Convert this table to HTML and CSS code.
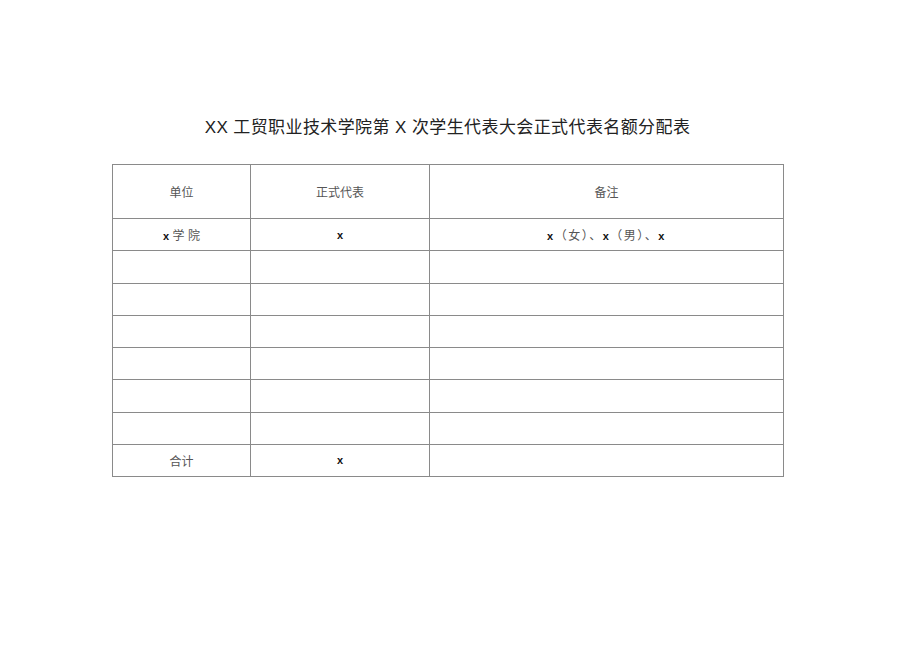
FILE: index.html
```html
<!DOCTYPE html>
<html lang="zh">
<head>
<meta charset="utf-8">
<link rel="stylesheet" href="styles.css">
</head>
<body>
<div class="page">
  <h1 class="title">XX 工贸职业技术学院第 X 次学生代表大会正式代表名额分配表</h1>
  <table class="quota">
    <colgroup>
      <col class="c1"><col class="c2"><col class="c3">
    </colgroup>
    <thead>
      <tr class="head"><th>单位</th><th>正式代表</th><th>备注</th></tr>
    </thead>
    <tbody>
      <tr><td><span class="x">x</span> 学 院</td><td><span class="x">x</span></td><td class="note"><span class="x">x</span>（女）、<span class="x">x</span>（男）、<span class="x">x</span></td></tr>
      <tr><td></td><td></td><td></td></tr>
      <tr><td></td><td></td><td></td></tr>
      <tr><td></td><td></td><td></td></tr>
      <tr><td></td><td></td><td></td></tr>
      <tr><td></td><td></td><td></td></tr>
      <tr><td></td><td></td><td></td></tr>
      <tr><td>合计</td><td><span class="x">x</span></td><td></td></tr>
    </tbody>
  </table>
</div>
</body>
</html>
```
FILE: styles.css
```css
html, body {
  margin: 0;
  padding: 0;
  background: #fff;
}
.page {
  padding: 118px 0 0 112px;
  width: 671px;
  font-family: "Liberation Sans", "Noto Sans CJK SC", sans-serif;
}
.title {
  margin: 0 0 26px 0;
  font-size: 17px;
  letter-spacing: 0.4px;
  font-weight: normal;
  color: #222;
  text-align: center;
  line-height: 20px;
  white-space: nowrap;
}
.quota {
  border-collapse: collapse;
  width: 671px;
  table-layout: fixed;
  font-size: 12px;
  color: #555;
}
.c1 { width: 138px; }
.c2 { width: 179px; }
.c3 { width: 354px; }
.quota th, .quota td {
  border: 1px solid #8a8a8a;
  text-align: center;
  padding: 0;
  height: 31.25px;
  font-weight: normal;
}
.quota tr.head th {
  height: 53px;
}
.quota td.note {
  letter-spacing: 1.5px;
}
.x {
  color: #111;
  font-weight: bold;
  font-size: 11px;
}
```
